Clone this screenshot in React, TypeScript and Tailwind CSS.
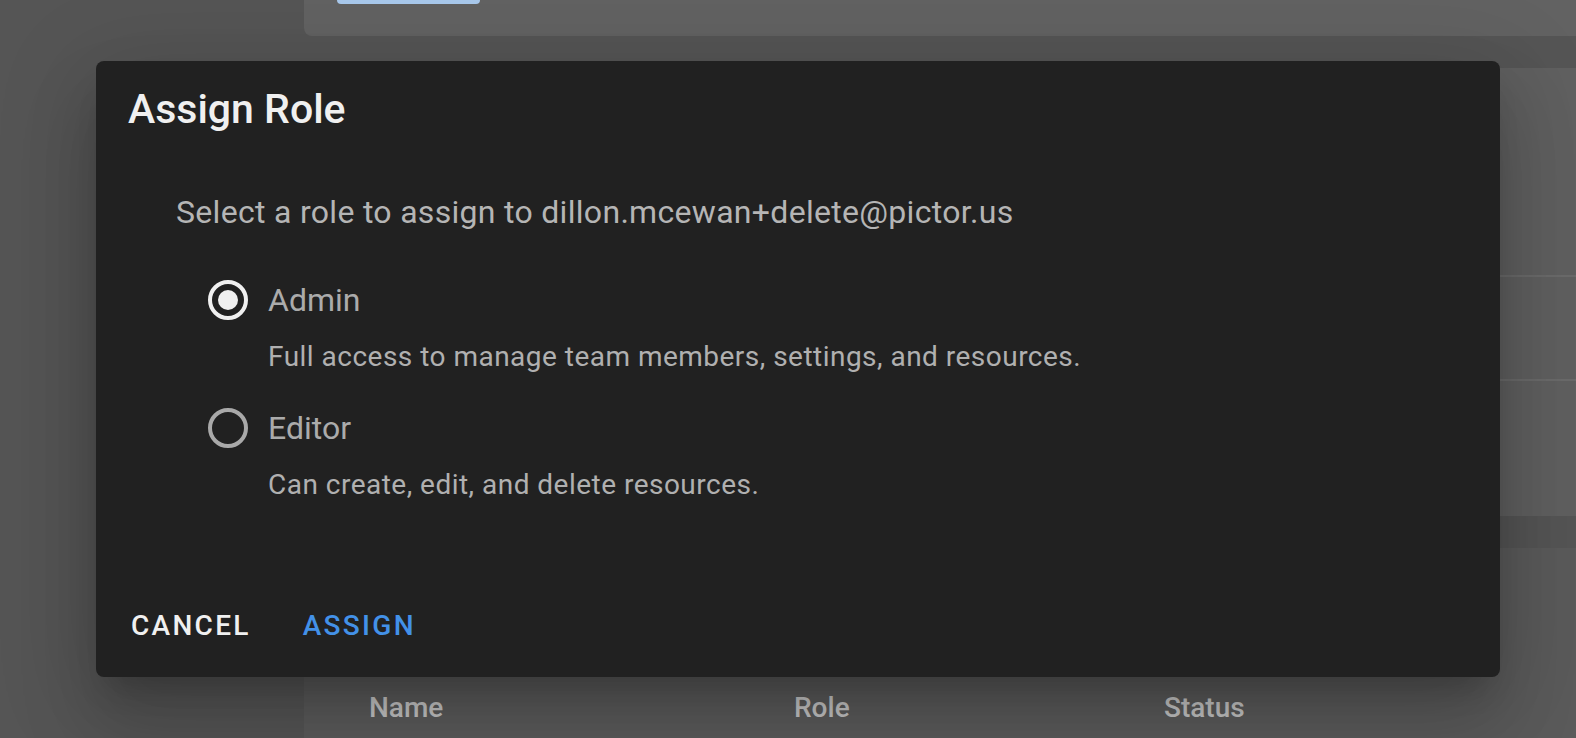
import React from "react";

const font = { fontFamily: "Roboto, 'Liberation Sans', sans-serif" };

function Radio({ checked }: { checked: boolean }) {
  return (
    <div
      className={`flex h-[40px] w-[40px] items-center justify-center rounded-full border-4 ${
        checked ? "border-[#f0f0f0]" : "border-[#a9a9a9]"
      }`}
    >
      {checked && <div className="h-[20px] w-[20px] rounded-full bg-[#f0f0f0]" />}
    </div>
  );
}

function RoleOption({
  label,
  description,
  checked,
}: {
  label: string;
  description: string;
  checked: boolean;
}) {
  return (
    <div>
      <div className="flex items-center">
        <Radio checked={checked} />
        <span className="ml-[20px] text-[32px] leading-[40px] text-[#ababab]">{label}</span>
      </div>
      <p className="mt-[19px] ml-[60px] text-[28px] leading-[36px] tracking-[0.48px] text-[#b0b0b0]">
        {description}
      </p>
    </div>
  );
}

export default function App() {
  return (
    <div className="relative h-[738px] w-full overflow-hidden bg-[#555555]" style={font}>
      {/* page behind the dialog */}
      <div className="flex h-full">
        <div className="w-[304px] shrink-0" />
        <div className="flex flex-1 flex-col">
          <div className="h-[36px] rounded-bl-lg bg-[#626262]">
            <div className="ml-[33px] h-[4px] w-[143px] rounded-b-md bg-[#a9c9ec]" />
          </div>
          <div className="mt-[32px] flex h-[448px] flex-col rounded-l-lg bg-[#606060]">
            <div className="h-[207px]" />
            <div className="h-[2px] bg-[#6b6b6b]" />
            <div className="h-[102px]" />
            <div className="h-[2px] bg-[#6b6b6b]" />
            <div className="flex-1" />
          </div>
          <div className="mt-[32px] flex-1 rounded-tl-lg bg-[#5b5b5b]">
            <div className="mt-[142px] flex text-[28px] font-medium leading-[36px] text-[#c6c6c6]">
              <span className="ml-[65px] w-[425px]">Name</span>
              <span className="w-[370px]">Role</span>
              <span>Status</span>
            </div>
          </div>
        </div>
      </div>

      {/* dialog */}
      <div className="absolute inset-0 pl-[96px] pt-[61px]">
        <div className="flex h-[616px] w-[1404px] flex-col rounded-lg bg-[#212121] shadow-[0_22px_30px_-14px_rgba(0,0,0,0.2),0_48px_76px_6px_rgba(0,0,0,0.14),0_18px_92px_16px_rgba(0,0,0,0.12)]">
          <h2 className="pl-[32px] pt-[24px] text-[41px] font-medium leading-[48px] text-[#f0f0f0]">
            Assign Role
          </h2>
          <p className="ml-[80px] mt-[59px] text-[32px] leading-[40px] tracking-[0.3px] text-[#b5b5b5]">
            Select a role to assign to dillon.mcewan+delete@pictor.us
          </p>
          <div className="ml-[112px] mt-[48px] flex flex-col gap-[33px]">
            <RoleOption
              label="Admin"
              checked
              description="Full access to manage team members, settings, and resources."
            />
            <RoleOption
              label="Editor"
              checked={false}
              description="Can create, edit, and delete resources."
            />
          </div>
          <div className="mt-auto flex pb-[33px] pl-[35px]">
            <button className="text-[28px] font-medium uppercase leading-[36px] tracking-[2.3px] text-[#f0f0f0]">
              Cancel
            </button>
            <button className="ml-[52px] text-[28px] font-medium uppercase leading-[36px] tracking-[2.3px] text-[#4391e8]">
              Assign
            </button>
          </div>
        </div>
      </div>
    </div>
  );
}
